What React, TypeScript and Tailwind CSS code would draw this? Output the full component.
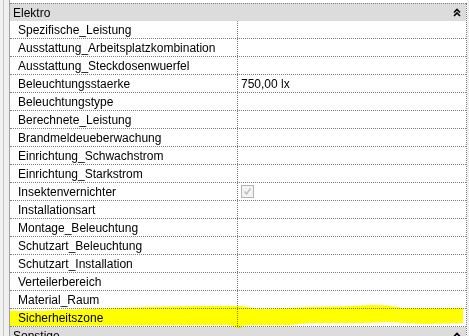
import React from "react";

const ROWS: { name: string; value?: string; check?: boolean }[] = [
  { name: "Spezifische_Leistung" },
  { name: "Ausstattung_Arbeitsplatzkombination" },
  { name: "Ausstattung_Steckdosenwuerfel" },
  { name: "Beleuchtungsstaerke", value: "750,00 lx" },
  { name: "Beleuchtungstype" },
  { name: "Berechnete_Leistung" },
  { name: "Brandmeldeueberwachung" },
  { name: "Einrichtung_Schwachstrom" },
  { name: "Einrichtung_Starkstrom" },
  { name: "Insektenvernichter", check: true },
  { name: "Installationsart" },
  { name: "Montage_Beleuchtung" },
  { name: "Schutzart_Beleuchtung" },
  { name: "Schutzart_Installation" },
  { name: "Verteilerbereich" },
  { name: "Material_Raum" },
  { name: "Sicherheitszone" },
];

function Collapse() {
  return (
    <svg width="8" height="9" viewBox="0 0 8 9" className="shrink-0">
      <path d="M1 4.5 L4 1.5 L7 4.5 M1 8 L4 5 L7 8" fill="none" stroke="#000" strokeWidth="1.6" />
    </svg>
  );
}

function GroupHeader({ label, top }: { label: string; top?: boolean }) {
  return (
    <div
      className={`flex h-[18px] shrink-0 items-center justify-between bg-[#dcdcdc] pl-[3px] pr-[5px] ${
        top ? "border-t border-dotted border-[#808080]" : ""
      }`}
    >
      <span>{label}</span>
      <Collapse />
    </div>
  );
}

function CheckBox() {
  return (
    <div className="flex h-[13px] w-[13px] items-center justify-center border border-[#b4b4b4] bg-[#f4f4f4]">
      <svg width="9" height="9" viewBox="0 0 9 9">
        <path d="M1.5 4.5 L3.5 7 L7.5 1.5" fill="none" stroke="#bcbcbc" strokeWidth="1.4" />
      </svg>
    </div>
  );
}

export default function App() {
  return (
    <div
      className="relative flex h-[336px] w-[469px] overflow-hidden bg-white text-[12px] leading-none text-black"
      style={{ fontFamily: '"Liberation Sans", Arial, sans-serif' }}
    >
      <div className="flex w-[9px] shrink-0 bg-[#f0f0f0]">
        <div className="w-[3px]" />
        <div className="w-px bg-[#c8c8c8]" />
      </div>
      <div className="flex w-[458px] shrink-0 flex-col border-l border-[#a0a0a0] pt-[3px]">
        <div className="flex flex-col border-r border-dotted border-[#808080]">
          <GroupHeader label="Elektro" top />
          {ROWS.map((r) => (
            <div key={r.name} className="flex h-[18px] shrink-0 border-b border-dotted border-[#808080]">
              <div className="flex w-[228px] shrink-0 items-center border-r border-dotted border-[#808080] pl-[8px]">
                {r.name}
              </div>
              <div className="flex flex-1 items-center pl-[3px]">
                {r.value}
                {r.check && <CheckBox />}
              </div>
            </div>
          ))}
          <GroupHeader label="Sonstige" />
        </div>
      </div>
      <div className="w-[2px] shrink-0 bg-[#f0f0f0]" />

      <svg
        className="pointer-events-none absolute left-0 top-0 mix-blend-multiply"
        width="469"
        height="336"
        viewBox="0 0 469 336"
      >
        <polygon
          fill="#ffff00"
          points="10,311 40,311 60,310 90,309 120,308 150,307 200,306 240,306 260,309 290,308 310,307 340,306.5 357,305.7 373,305 387,305.5 403,308 463,308 463,323 425,324 405,323 387,322 372,322.7 357,323 310,323 290,325 250,325 240,326 242,328 238,328 230,325 200,325 10,326"
        />
      </svg>
    </div>
  );
}
